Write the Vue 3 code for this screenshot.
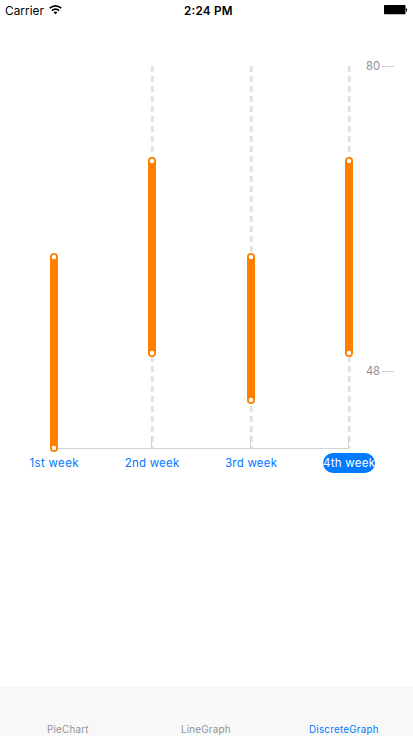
<script setup>
const points = [
  { label: '1st week', x: 54, top: 257, bottom: 448, width: 49 },
  { label: '2nd week', x: 152, top: 161, bottom: 353, width: 54.5 },
  { label: '3rd week', x: 251, top: 257, bottom: 400, width: 52 },
  { label: '4th week', x: 349, top: 161, bottom: 353, width: 52, active: true },
]
const ticks = [
  { value: 80, y: 66 },
  { value: 48, y: 371 },
]
const tabs = [
  { name: 'PieChart', width: 42 },
  { name: 'LineGraph', width: 50 },
  { name: 'DiscreteGraph', width: 70, active: true },
]
</script>

<template>
  <div class="screen">
    <header class="status">
      <div class="carrier">
        <svg width="40" height="14"><text x="0" y="11" textLength="39" class="carrier-text">Carrier</text></svg>
        <svg class="wifi" width="13" height="10" viewBox="0 0 13 10">
          <path d="M.7 3.2Q6.5-1.5 12.3 3.2M2.8 5.6Q6.5 2.6 10.2 5.6" fill="none" stroke="#000" stroke-width="1.6" />
          <path d="M4.6 7.2Q6.5 5.7 8.4 7.2L6.5 9.2Z" />
        </svg>
      </div>
      <svg class="time" width="50" height="14"><text x="0" y="11" textLength="48.5">2:24 PM</text></svg>
      <svg class="battery" width="24" height="10" viewBox="0 0 24 10">
        <rect x="0" y="0" width="21.5" height="9.3" rx="0.8" />
        <rect x="22" y="3.5" width="1" height="3" />
      </svg>
    </header>

    <main class="chart">
      <svg width="413" height="667" viewBox="0 20 413 667">
        <g v-for="p in points.slice(1)" :key="p.x">
          <line :x1="p.x + 0.3" :x2="p.x + 0.3" y1="66" y2="448" class="guide" />
          <line :x1="p.x - 0.5" :x2="p.x - 0.5" y1="436" y2="448" class="axis" />
        </g>
        <line x1="54" x2="349" y1="448.5" y2="448.5" class="axis" />
        <g v-for="p in points" :key="p.label">
          <rect :x="p.x - 4" :y="p.top - 4" width="8" :height="p.bottom - p.top + 8" rx="4" class="range" />
          <circle :cx="p.x" :cy="p.top" r="2.2" class="dot" />
          <circle :cx="p.x" :cy="p.bottom" r="2.2" class="dot" />
          <rect v-if="p.active" :x="p.x - 26" y="453" width="52" height="20" rx="10" class="pill" />
          <text :x="p.x - p.width / 2" y="467" :textLength="p.width" class="label" :class="{ active: p.active }">{{ p.label }}</text>
        </g>
        <g v-for="t in ticks" :key="t.value">
          <text x="366" :y="t.y + 4" textLength="14" class="value">{{ t.value }}</text>
          <line x1="382" x2="394" :y1="t.y + 0.5" :y2="t.y + 0.5" class="axis" />
        </g>
      </svg>
    </main>

    <nav class="tabs">
      <div v-for="t in tabs" :key="t.name" class="tab" :class="{ active: t.active }">
        <svg :width="t.width" height="13"><text x="0" y="10" :textLength="t.width - 0.5">{{ t.name }}</text></svg>
      </div>
    </nav>
  </div>
</template>

<style>
body { margin: 0; background: #fff; overflow: hidden; }
</style>

<style scoped>
.screen { width: 413px; height: 736px; display: flex; flex-direction: column; font-family: Inter, "Liberation Sans", sans-serif; background: #fff; }
svg { display: block; }
.status { height: 20px; display: grid; grid-template-columns: 184px 1fr auto; align-items: start; padding-right: 5px; box-sizing: border-box; }
.carrier { display: flex; padding: 4px 0 0 5px; }
.carrier-text { font-size: 11.8px; }
.wifi { margin: 1px 0 0 4px; }
.time { margin-top: 4px; font-size: 11.7px; font-weight: 600; }
.battery { margin-top: 5px; }
.chart { height: 667px; }
.guide { stroke: #e2e2e5; stroke-width: 2.8; stroke-dasharray: 6 4; }
.axis { stroke: #d4d4d6; stroke-width: 1; }
.range { fill: #ff8000; }
.dot { fill: #fff; }
.pill { fill: #007aff; }
.label { font-size: 11.5px; fill: #007aff; }
.label.active { fill: #fff; }
.value { font-size: 11.2px; fill: #8e8e93; }
.tabs { height: 49px; display: grid; grid-template-columns: 136px 139px 137px; background: #f8f8f8; }
.tab { display: flex; justify-content: center; align-items: flex-start; padding-top: 36px; font-size: 9.8px; fill: #929292; }
.tab.active { fill: #007aff; }
</style>
